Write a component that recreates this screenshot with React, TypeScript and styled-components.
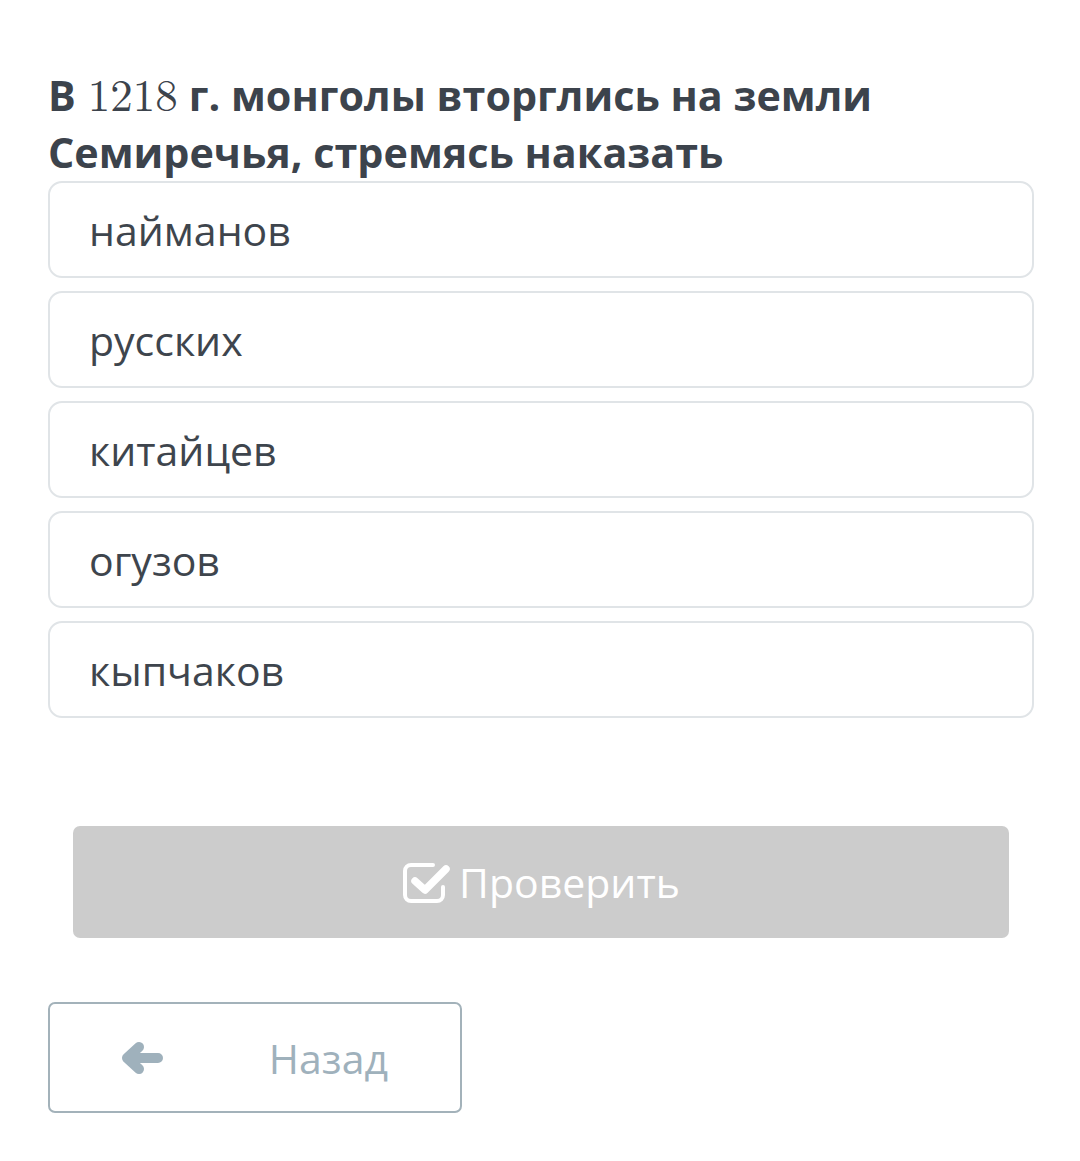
import React from "react";
import styled, { createGlobalStyle } from "styled-components";

const GlobalStyle = createGlobalStyle`
  html, body {
    margin: 0;
    padding: 0;
    background: #ffffff;
    font-family: "Open Sans", "Noto Sans", sans-serif;
  }
`;

const Page = styled.div`
  width: 1080px;
  min-height: 1161px;
  box-sizing: border-box;
  padding: 67px 46px 0 48px;
`;

const Question = styled.h2`
  margin: 0;
  font-size: 41.3px;
  line-height: 57px;
  font-weight: 700;
  color: #3c434c;
`;

const Num = styled.span`
  display: inline-block;
  margin: 0 11px 0 12px;
  font-family: "Latin Modern Roman", "DejaVu Serif", "Liberation Serif", serif;
  font-size: 45px;
  line-height: 1;
  font-weight: 400;
`;

const Options = styled.div`
  display: flex;
  flex-direction: column;
  gap: 13px;
`;

const Option = styled.div`
  height: 97px;
  box-sizing: border-box;
  border: 2px solid #e0e4e7;
  border-radius: 14px;
  display: flex;
  align-items: center;
  padding-left: 39px;
  font-size: 41px;
  color: #3e454d;
`;

const CheckButton = styled.button`
  margin: 108px 25px 0 25px;
  width: 936px;
  height: 112px;
  border: none;
  border-radius: 7px;
  background: #cccccc;
  color: #ffffff;
  font-family: inherit;
  font-size: 41px;
  display: flex;
  align-items: center;
  justify-content: center;
  gap: 9px;
  padding: 0;
`;

const BackButton = styled.button`
  margin-top: 64px;
  width: 414px;
  height: 111px;
  box-sizing: border-box;
  border: 2px solid #a3b2ba;
  border-radius: 7px;
  background: #ffffff;
  color: #9fb1bc;
  font-family: inherit;
  font-size: 41px;
  display: flex;
  align-items: center;
  justify-content: space-between;
  padding: 0 72px 0 70px;
`;

const CheckIcon: React.FC = () => (
  <svg width="48" height="42" viewBox="0 0 48 42" fill="none">
    <path
      d="M31 4 H9 a6 6 0 0 0 -6 6 V34 a6 6 0 0 0 6 6 H35 a6 6 0 0 0 6 -6 V26"
      stroke="#ffffff"
      strokeWidth="4"
      strokeLinecap="round"
    />
    <path
      d="M13 20 L23 29 L44 8"
      stroke="#ffffff"
      strokeWidth="7.5"
      strokeLinecap="round"
      strokeLinejoin="round"
    />
  </svg>
);

const ArrowIcon: React.FC = () => (
  <svg width="44" height="36" viewBox="0 0 44 36" fill="none">
    <path
      d="M38 18 H10 M19 7 L7 18 L19 29"
      stroke="#9fb1bc"
      strokeWidth="10"
      strokeLinecap="round"
      strokeLinejoin="round"
    />
  </svg>
);

const options = ["найманов", "русских", "китайцев", "огузов", "кыпчаков"];

const App: React.FC = () => {
  return (
    <>
      <GlobalStyle />
      <Page>
        <Question>
          В<Num>1218</Num>г. монголы вторглись на земли Семиречья, стремясь
          наказать
        </Question>
        <Options>
          {options.map((o) => (
            <Option key={o}>{o}</Option>
          ))}
        </Options>
        <CheckButton>
          <CheckIcon />
          Проверить
        </CheckButton>
        <BackButton>
          <ArrowIcon />
          Назад
        </BackButton>
      </Page>
    </>
  );
};

export default App;
